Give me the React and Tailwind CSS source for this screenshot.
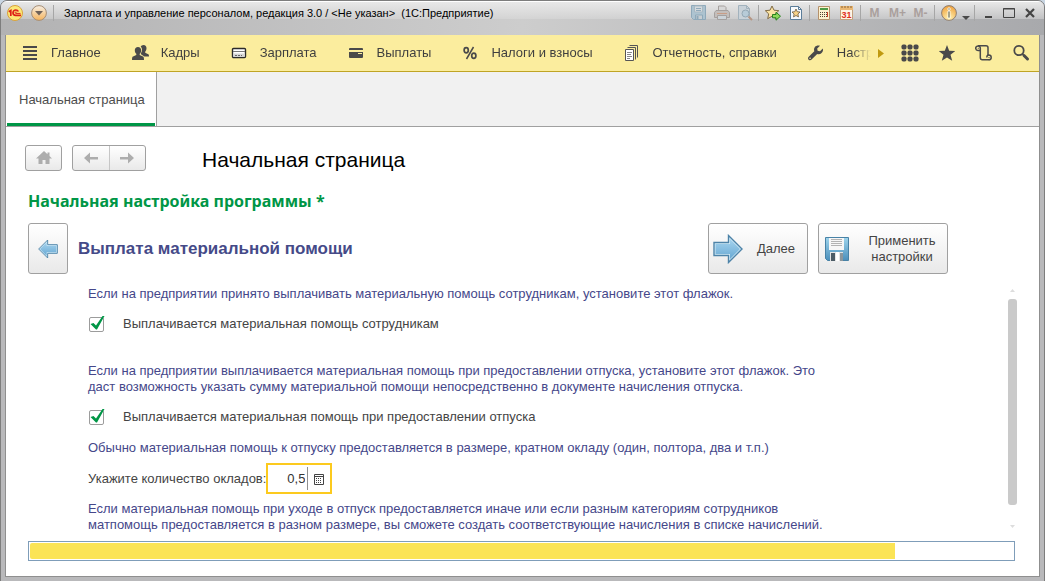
import { useState } from 'react'

const menuItems = [
  { title: 'Главное', icon: MenuIcon },
  { title: 'Кадры', icon: PeopleIcon },
  { title: 'Зарплата', icon: SalaryIcon },
  { title: 'Выплаты', icon: CardIcon },
  { title: 'Налоги и взносы', icon: PercentIcon },
  { title: 'Отчетность, справки', icon: ReportsIcon },
  { title: 'Настр', icon: WrenchIcon },
]

function MenuIcon() {
  return (
    <svg width="16" height="16" viewBox="0 0 16 16" fill="#4a4a4a">
      <path d="M1 1h14v2H1zM1 5h14v2H1zM1 9h14v2H1zM1 13h14v2H1z" />
    </svg>
  )
}

function PeopleIcon() {
  return (
    <svg width="17" height="16" viewBox="0 0 17 16" fill="#4a4a4a">
      <path d="M11.500 0c2 0 3 1.400 3 3.300 0 1.500-.6 2.700-1.300 3.400v1.100l3.100 1.500c.5.3.7.8.7 2.200h-4.600L9.300 9.600 8.800 8.400c.7-.9 1.200-2.100 1.200-3.600 0-1.300-.5-2.400-1.300-3C9.200.7 10.200 0 11.500 0z" />
      <path d="M6 2c2 0 3.200 1.300 3.200 3.200 0 1.600-.7 2.900-1.500 3.600v1.300l3.300 1.500c.7.3 1 1 1 3.400H0c0-2.400.3-3.100 1-3.400l3.300-1.500V8.800C3.500 8.100 2.800 6.800 2.800 5.200 2.800 3.300 4 2 6 2z" />
    </svg>
  )
}

function SalaryIcon() {
  return (
    <svg width="16" height="16" viewBox="0 0 16 16">
      <rect x="1.500" y="3.500" width="13" height="9" rx="1" fill="#fff" stroke="#2b2b2b" strokeWidth="1.400" />
      <path d="M2 6.500h12" stroke="#777" />
      <path d="M2.500 8.500h11v3.500h-11z" fill="#d5d5d5" />
      <path d="M4 10.500h7" stroke="#666" strokeDasharray="2 1" />
    </svg>
  )
}

function CardIcon() {
  return (
    <svg width="16" height="16" viewBox="0 0 16 16" fill="#4a4a4a">
      <path d="M2 3h12q1 0 1 1v1H1V4q0-1 1-1zM1 7h14v5q0 1-1 1H2q-1 0-1-1zM10 8v1h4V8z" fillRule="evenodd" />
    </svg>
  )
}

function PercentIcon() {
  return (
    <svg width="16" height="16" viewBox="0 0 16 16" fill="none" stroke="#4a4a4a" strokeWidth="1.700">
      <ellipse cx="4.200" cy="5.300" rx="2.100" ry="2.600" />
      <ellipse cx="11.800" cy="10.700" rx="2.100" ry="2.600" />
      <path d="M11.500 2 4.500 14" strokeWidth="1.500" />
    </svg>
  )
}

function ReportsIcon() {
  return (
    <svg width="16" height="16" viewBox="0 0 16 16" fill="none" stroke="#555">
      <path d="M5.500.5h8v12M3.500 2.500h8v12" />
      <path d="M1.500 4.500h8v11h-8z" fill="#fff" />
      <path d="M3 7.500h5M3 9.500h4M3 11.500h5M3 13.500h3" stroke="#888" />
    </svg>
  )
}

function WrenchIcon() {
  return (
    <svg width="16" height="16" viewBox="0 0 16 16" fill="#4a4a4a">
      <path d="M14.800 3.500 12 6.200 9.600 5.700 9.200 3.500 12 .7C10.200 0 8 .5 6.900 1.900 5.900 3.200 5.800 4.800 6.300 6.200L.7 11.700c-.9.9-.9 2.200-.1 3s2.200.8 3-.1l5.600-5.500c1.500.5 3.200.2 4.400-1 1.300-1.200 1.700-3 1.200-4.600zM2.100 14a.8.8 0 1 1 0-1.600.8.8 0 0 1 0 1.600z" fillRule="evenodd" />
    </svg>
  )
}

function SaveIcon() {
  return (
    <svg width="16" height="16" viewBox="0 0 16 16" fill="none" stroke="#8fa9ba">
      <path d="M.5.5h14v14H2.500l-2-2z" fill="#adc3d0" />
      <path d="M3.500 1h8v6h-8z" fill="#d5dade" stroke="#a8b9c3" />
      <path d="M5 3.500h5M5 5.500h5" />
      <path d="M4.500 14v-4h7v4" fill="#c8ced2" />
      <path d="M6.500 11v3" strokeWidth="2" />
    </svg>
  )
}

function PrinterIcon() {
  return (
    <svg width="16" height="16" viewBox="0 0 16 16" fill="#c3bebb" stroke="#a5a09e">
      <path d="M4.500 6V1h6l1.500 1.500V6" fill="#d8d8d8" />
      <path d="M2 5.500h12l1.500 2v5H.5v-5z" />
      <path d="M3.500 10.500h9v4h-9z" fill="#ccd3d8" />
      <path d="M3 8.500h10" stroke="#c99d86" />
    </svg>
  )
}

function PreviewIcon() {
  return (
    <svg width="16" height="16" viewBox="0 0 16 16" fill="none">
      <path d="M1.500.5h8l3 3v11h-11z" fill="#c9d2d9" stroke="#a2b2bd" />
      <path d="M9.500.5v3h3" stroke="#a2b2bd" />
      <circle cx="8.500" cy="8.500" r="3.500" fill="#b7cbd8" stroke="#94a8b5" />
      <path d="m11.500 11.500 3.500 3.500" stroke="#b69684" strokeWidth="2" />
    </svg>
  )
}

function AddFavoriteIcon() {
  return (
    <svg width="16" height="16" viewBox="0 0 16 16">
      <path d="m7 1 2 4.200 4.800.5-3.500 3.200 1 4.800L7 11.300l-4.300 2.400 1-4.800L.3 5.700l4.700-.5z" fill="#fbe3a3" stroke="#806b45" />
      <path d="M7.500 9.500H11V7.200l4.500 4-4.500 4v-2.400H7.500z" fill="#8dd85a" stroke="#28811e" />
    </svg>
  )
}

function FavoritesIcon() {
  return (
    <svg width="16" height="16" viewBox="0 0 16 16">
      <path d="M2.500 1.500h8l3 3v10h-11z" fill="#f7fafd" stroke="#5b7d99" />
      <path d="M10.500 1.500v3h3" fill="none" stroke="#5b7d99" />
      <path d="m8 4 1.200 2.700 2.800.3-2.100 2 .6 2.900L8 10.500l-2.500 1.400.6-2.900L4 7l2.800-.3z" fill="#f9d488" stroke="#6d5a40" strokeWidth=".8" />
    </svg>
  )
}

function CalculatorIcon() {
  return (
    <svg width="16" height="16" viewBox="0 0 16 16">
      <path d="M2.500 1.500h11v13h-11z" fill="#fdf1cf" stroke="#b5916b" />
      <path d="M4 3h8v2H4z" fill="#4d9a45" />
      <path d="M4 7.500h7M4 9.500h7M4 11.500h7" stroke="#544334" strokeDasharray="1 1" />
      <path d="M11 7h1v5h-1z" fill="#d23d24" />
    </svg>
  )
}

function CalendarIcon() {
  return (
    <svg width="16" height="16" viewBox="0 0 16 16">
      <path d="M1.500 1.500h12v13h-12z" fill="#fff6e4" stroke="#c2a07c" />
      <path d="M1 1h13v4H1z" fill="#eab873" />
      <path d="M3 1v2M6 1v2M9 1v2M12 1v2" stroke="#8a6238" />
      <text x="7.500" y="13" textAnchor="middle" fontSize="9" fill="#e0321e">31</text>
    </svg>
  )
}

function InfoIcon() {
  return (
    <svg width="16" height="16" viewBox="0 0 16 16">
      <defs>
        <radialGradient id="info" cx=".5" cy=".85" r=".85">
          <stop offset="0" stopColor="#fff3b4" />
          <stop offset="1" stopColor="#f0a03a" />
        </radialGradient>
      </defs>
      <circle cx="8" cy="8" r="7.400" fill="url(#info)" stroke="#8d7f76" />
      <path d="M7 3h2v2H7zM7 6h2v7H7z" fill="#6a6742" stroke="#fff" strokeWidth=".8" />
    </svg>
  )
}

function LogoIcon() {
  return (
    <svg width="16" height="16" viewBox="0 0 16 16">
      <circle cx="8" cy="8" r="7.500" fill="#fce878" stroke="#d9a23a" />
      <g fill="none" stroke="#dd1f18" strokeWidth="1.700">
        <path d="m1.800 6.800 2-1.300V11" />
        <path d="M11.300 6.500C10.800 5.400 9.800 5 8.800 5 7.200 5 6 6.200 6 7.700s1.200 2.600 2.700 2.600H14" />
        <path d="M9.800 7.300C9.500 7 9.200 6.900 8.900 6.900c-1 0-1 1.500 0 1.500h4.600" strokeWidth="1" />
      </g>
    </svg>
  )
}

function SystemMenuIcon() {
  return (
    <svg width="16" height="16" viewBox="0 0 16 16">
      <defs>
        <linearGradient id="sysmenu" x2="0" y2="1">
          <stop offset="0" stopColor="#f7efe4" />
          <stop offset="1" stopColor="#f6b45c" />
        </linearGradient>
      </defs>
      <circle cx="8" cy="8" r="7.400" fill="url(#sysmenu)" stroke="#a58d75" />
      <path d="M4 6h8L8 10.500z" fill="#6e6158" />
    </svg>
  )
}

function GridIcon() {
  return (
    <svg width="18" height="18" viewBox="0 0 18 18" fill="#4a4a4a">
      {[0, 6, 12].map((y) =>
        [0, 6, 12].map((x) => <rect key={`${x}-${y}`} x={x + 0.5} y={y + 0.5} width="5" height="5" rx="1.700" />)
      )}
    </svg>
  )
}

function StarIcon() {
  return (
    <svg width="18" height="18" viewBox="0 0 18 18" fill="#4a4a4a">
      <path d="m9 1 2.200 5.700 6.100.3-4.800 3.800 1.700 5.900L9 13.400l-5.200 3.300 1.700-5.900L.7 7l6.100-.3z" />
    </svg>
  )
}

function HistoryIcon() {
  return (
    <svg width="18" height="18" viewBox="0 0 18 18" fill="none" stroke="#4a4a4a" strokeWidth="1.500">
      <path d="M5 6.500H3A2.300 2.300 0 1 1 5.300 4v9.500c0 1.500.8 2.300 2 2.300h7" />
      <path d="M3 1.800h8c1.300 0 2 .8 2 2v7.500" />
      <path d="M12 13.500c-.4-1.400.4-2.500 1.800-2.500 1.300 0 2.400 1 2.400 2.400s-1 2.400-2.400 2.400" />
      <path d="M2.800 4.300h1M13.500 13.500h1" strokeWidth="1" />
    </svg>
  )
}

function SearchIcon() {
  return (
    <svg width="18" height="18" viewBox="0 0 18 18" fill="none" stroke="#4a4a4a">
      <circle cx="7" cy="6.500" r="4.700" strokeWidth="1.800" />
      <path d="m10.500 10 1.500 1.500" strokeWidth="1.500" />
      <path d="m12 11.500 3.500 3.500" strokeWidth="3" strokeLinecap="round" />
    </svg>
  )
}

function ArrowShape({ size, flip }) {
  return (
    <svg width={size} height={size} viewBox="0 0 30 30" className={flip ? '-scale-x-100' : ''}>
      <defs>
        <linearGradient id="arrow" x2="0" y2="1">
          <stop offset="0" stopColor="#a5d3ee" />
          <stop offset="1" stopColor="#69a9d3" />
        </linearGradient>
      </defs>
      <path d="M1 8.500h14.500V1.500L29 15 15.500 28.500v-7H1z" fill="#d3ecf8" stroke="#4d83a8" strokeWidth="1.400" />
      <path d="M2.500 10h14.500V5l10 10-10 10v-5H2.500z" fill="url(#arrow)" />
    </svg>
  )
}

function FloppyIcon() {
  return (
    <svg width="24" height="24" viewBox="0 0 24 24">
      <defs>
        <linearGradient id="floppy" x2="0" y2="1">
          <stop offset="0" stopColor="#9ed4ec" />
          <stop offset="1" stopColor="#4b8fbb" />
        </linearGradient>
      </defs>
      <path d="M.5.5h23v23h-21l-2-2z" fill="url(#floppy)" stroke="#4882a6" />
      <path d="M4 1h15v12H4z" fill="#f7f7f7" />
      <path d="M6 2.500h11M6 4.500h11M6 6.500h11M6 8.500h11" stroke="#b3b3b3" />
      <path d="M5 15h13v9H5z" fill="#e4e4e4" />
      <path d="M6 16h4v8H6z" fill="#4c5c66" />
      <path d="M11 15h3v9h-3z" fill="#fff" />
      <path d="M15 16h3v8h-3z" fill="#8b969c" />
    </svg>
  )
}

function TitleButton({ label, children }) {
  return (
    <button aria-label={label} className="flex h-4 w-[23px] items-center justify-center text-xs font-bold text-[#aaa09d]">
      {children}
    </button>
  )
}

function Separator() {
  return <span className="mx-[2px] h-4 w-px bg-[#a6a6a6]" />
}

function TitleBar() {
  return (
    <header className="flex h-[34px] shrink-0 items-start border-t border-white bg-[linear-gradient(to_bottom,#e8e8e8,#dcdcdc80_50%,transparent_52%),linear-gradient(to_right,#b2b2b3,#cdcdcd_50%,#a8a9ac)] pt-[3px] pr-[4px] pl-[6px]">
      <button aria-label="1С:Предприятие" className="mr-2"><LogoIcon /></button>
      <button aria-label="Меню"><SystemMenuIcon /></button>
      <span className="mr-2.5 ml-1.5 h-4 w-px bg-[#a6a6a6]" />
      <h1 className="flex-1 text-[11px] leading-4 whitespace-pre text-black">
        Зарплата и управление персоналом, редакция 3.0 / &lt;Не указан&gt;  (1С:Предприятие)
      </h1>
      <TitleButton label="Сохранить"><SaveIcon /></TitleButton>
      <TitleButton label="Печать"><PrinterIcon /></TitleButton>
      <TitleButton label="Предварительный просмотр"><PreviewIcon /></TitleButton>
      <Separator />
      <TitleButton label="Добавить в избранное"><AddFavoriteIcon /></TitleButton>
      <TitleButton label="Избранное"><FavoritesIcon /></TitleButton>
      <Separator />
      <TitleButton label="Калькулятор"><CalculatorIcon /></TitleButton>
      <TitleButton label="Календарь"><CalendarIcon /></TitleButton>
      <Separator />
      <TitleButton>M</TitleButton>
      <TitleButton>M+</TitleButton>
      <TitleButton>M-</TitleButton>
      <Separator />
      <TitleButton label="О программе"><InfoIcon /></TitleButton>
      <button aria-label="Ещё" className="flex h-4 w-3 items-end justify-center pb-px">
        <svg width="8" height="4" viewBox="0 0 8 4" fill="#4a4a4a"><path d="M0 0h8L4 4z" /></svg>
      </button>
      <Separator />
      <button aria-label="Свернуть" className="flex h-4 w-[21px] items-center justify-center">
        <svg width="12" height="12" viewBox="0 0 12 12" fill="#444"><path d="M3 9h7v2H3z" /></svg>
      </button>
      <button aria-label="Развернуть" className="flex h-4 w-[21px] items-center justify-center">
        <svg width="12" height="12" viewBox="0 0 12 12" fill="none" stroke="#444"><path d="M.5 1.500h11v9H.5zM0 2h12" /></svg>
      </button>
      <button aria-label="Закрыть" className="flex h-4 w-[21px] items-center justify-center">
        <svg width="12" height="12" viewBox="0 0 12 12" stroke="#444" strokeWidth="2.200"><path d="m2 2 8 8M10 2l-8 8" /></svg>
      </button>
    </header>
  )
}

function MainMenu() {
  return (
    <div className="flex h-[37px] shrink-0 items-center border-b border-[#bfa425] bg-[#fbed9e]">
      <nav className="flex min-w-0 flex-1 gap-[31px] mask-r-from-[calc(100%-20px)] mask-r-to-100% pl-4">
        {menuItems.map(({ title, icon: Icon }) => (
          <a key={title} href="#" className="flex shrink-0 items-center text-[13px] leading-4 text-[#3f3f3f]">
            <span className="w-[29px]"><Icon /></span>
            {title}
          </a>
        ))}
      </nav>
      <button aria-label="Далее по меню" className="flex w-5 justify-center">
        <svg width="6" height="9" viewBox="0 0 6 9" fill="#c09a10"><path d="M0 0v9l6-4.500z" /></svg>
      </button>
      <button aria-label="Функции" className="flex w-[37px] justify-center"><GridIcon /></button>
      <button aria-label="Избранное" className="flex w-[37px] justify-center"><StarIcon /></button>
      <button aria-label="История" className="flex w-[37px] justify-center"><HistoryIcon /></button>
      <button aria-label="Поиск" className="flex w-[37px] justify-center"><SearchIcon /></button>
    </div>
  )
}

function CheckField({ label, checked, onChange }) {
  return (
    <label className="flex items-center gap-[19px] leading-4 text-[#444]">
      <span className="relative flex h-4 w-4 items-center">
        <input
          type="checkbox"
          checked={checked}
          onChange={onChange}
          className="peer ml-px h-[15px] w-[15px] appearance-none rounded-[2px] border border-[#9c9c9c] bg-white"
        />
        <svg
          width="16"
          height="16"
          viewBox="0 0 16 16"
          fill="#009646"
          className="pointer-events-none absolute bottom-px left-[2px] hidden peer-checked:block"
        >
          <path d="M.5 9 3.500 8 6 10.500 12.500 1h2L7 14.500H6z" />
        </svg>
      </span>
      {label}
    </label>
  )
}

const buttonStyle = 'rounded-[3px] border border-[#a0a0a0] bg-linear-to-b from-white to-[#e9e9e9]'

export default function App() {
  const [payHelp, setPayHelp] = useState(true)
  const [payVacation, setPayVacation] = useState(true)
  const [salaries, setSalaries] = useState('0,5')
  const progress = 88

  return (
    <div className="bg-[#c9d6e3] font-['Liberation_Sans',Arial,sans-serif]">
      <div className="flex min-h-screen flex-col overflow-hidden rounded-t-[7px] border border-[#7d7d7d] bg-[#b9b9bb]">
        <TitleBar />
        <div className="mx-1 mb-1 flex flex-1 flex-col border border-t-0 border-[#8f8f8f] bg-white">
          <MainMenu />

          <div className="flex h-[55px] shrink-0 border-b border-[#a0a0a0] bg-[#f1f1f1]">
            <a
              href="#"
              className="flex items-center border-r border-[#a0a0a0] bg-white px-px text-[13px] text-[#4d4d4d]"
            >
              <span className="flex h-full items-center border-b-[3px] border-[#009646] pt-1 pr-2.5 pl-3">Начальная страница</span>
            </a>
          </div>

          <main className="flex flex-1 flex-col px-[22px] pt-[18px] pb-[15px] text-[13px]">
            <div className="-ml-[3px] flex h-[26px] items-center">
              <button aria-label="Домой" className={`${buttonStyle} flex h-[26px] w-[37px] items-center justify-center`}>
                <svg width="16" height="14" viewBox="0 0 16 14" fill="#adadad">
                  <path d="M8 0 0 7.500h2.500V13h4V9h3v4h4V7.500H16l-2.500-2.400V1.500h-2v1.700z" />
                </svg>
              </button>
              <div className={`${buttonStyle} ml-2.5 flex h-[26px] w-[74px]`}>
                <button aria-label="Назад" className="flex flex-1 items-center justify-center border-r border-[#c6c6c6]">
                  <svg width="14" height="12" viewBox="0 0 14 12" fill="#adadad">
                    <path d="M0 6 6 .5V5h8v2.500H6V11.500z" />
                  </svg>
                </button>
                <button aria-label="Вперед" className="flex flex-1 items-center justify-center">
                  <svg width="14" height="12" viewBox="0 0 14 12" fill="#adadad">
                    <path d="M14 6 8 .5V5H0v2.500h8V11.500z" />
                  </svg>
                </button>
              </div>
              <h2 className="ml-14 pt-1 text-[21px] text-black">Начальная страница</h2>
            </div>

            <h3 className="mt-[18px] font-['Noto_Sans',sans-serif] text-base leading-6 font-bold text-[#009646]">
              Начальная настройка программы *
            </h3>

            <div className="mt-[10px] flex items-center">
              <button aria-label="Назад" className={`${buttonStyle} flex h-[51px] w-10 items-center justify-center`}>
                <ArrowShape size={20} flip />
              </button>
              <h4 className="ml-2.5 flex-1 text-[17px] font-bold text-[#454a88]">Выплата материальной помощи</h4>
              <div className="mr-[69px] flex gap-2.5 text-[#444]">
                <button className={`${buttonStyle} flex h-[51px] w-[100px] items-center pl-1`}>
                  <ArrowShape size={30} />
                  <span className="flex-1 pl-0.5">Далее</span>
                </button>
                <button className={`${buttonStyle} flex h-[51px] w-[130px] items-center pl-1.5 leading-4`}>
                  <FloppyIcon />
                  <span className="flex-1 pl-2">Применить<br />настройки</span>
                </button>
              </div>
            </div>

            <div className="mt-3 flex flex-1">
              <div className="flex-1 pl-[60px] leading-4 text-[#45478a]">
                <p>Если на предприятии принято выплачивать материальную помощь сотрудникам, установите этот флажок.</p>
                <div className="mt-3.5">
                  <CheckField
                    label="Выплачивается материальная помощь сотрудникам"
                    checked={payHelp}
                    onChange={(e) => setPayHelp(e.target.checked)}
                  />
                </div>
                <p className="mt-[31px]">
                  Если на предприятии выплачивается материальная помощь при предоставлении отпуска, установите этот флажок. Это
                  <br />
                  даст возможность указать сумму материальной помощи непосредственно в документе начисления отпуска.
                </p>
                <div className="mt-3.5">
                  <CheckField
                    label="Выплачивается материальная помощь при предоставлении отпуска"
                    checked={payVacation}
                    onChange={(e) => setPayVacation(e.target.checked)}
                  />
                </div>
                <p className="mt-[15px]">
                  Обычно материальная помощь к отпуску предоставляется в размере, кратном окладу (один, полтора, два и т.п.)
                </p>
                <div className="mt-[7px] flex items-center">
                  <label htmlFor="salaries" className="text-[#444]">Укажите количество окладов:</label>
                  <div className="flex h-[31px] w-[66px] items-center border-2 border-[#fcca1e] bg-white">
                    <input
                      id="salaries"
                      value={salaries}
                      onChange={(e) => setSalaries(e.target.value)}
                      className="h-[23px] min-w-0 flex-1 border-r border-[#8f8f8f] pr-0.5 text-right text-[13px] text-[#333] outline-none"
                    />
                    <button aria-label="Калькулятор" className="flex w-[22px] justify-center pt-0.5">
                      <svg width="10" height="11" viewBox="0 0 10 11" fill="none" stroke="#444">
                        <path d="M.5.5h9v10h-9zM0 2.500h10" />
                        <path d="M2 4.500h6M2 6.500h6M2 8.500h6" strokeDasharray="1 1" />
                      </svg>
                    </button>
                  </div>
                </div>
                <p className="mt-[7px]">
                  Если материальная помощь при уходе в отпуск предоставляется иначе или если разным категориям сотрудников
                  <br />
                  матпомощь предоставляется в разном размере, вы сможете создать соответствующие начисления в списке начислений.
                </p>
              </div>

              <div className="flex w-[9px] flex-col items-center pt-[3px] pb-[5px]">
                <svg width="5" height="3" viewBox="0 0 5 3" fill="#ddd"><path d="M0 3h5L2.500 0z" /></svg>
                <div className="mt-[7px] mb-5 w-full flex-1 rounded-[3px] bg-[#cacaca]" />
                <svg width="5" height="3" viewBox="0 0 5 3" fill="#ddd"><path d="M0 0h5L2.500 3z" /></svg>
              </div>
            </div>

            <div
              role="progressbar"
              aria-valuenow={progress}
              className="mt-2 mr-0.5 h-5 border border-[#7f9db9] bg-white p-px"
            >
              <div className="h-full rounded-l-[2px] bg-[#fbe455]" style={{ width: `${progress}%` }} />
            </div>
          </main>
        </div>
      </div>
    </div>
  )
}
